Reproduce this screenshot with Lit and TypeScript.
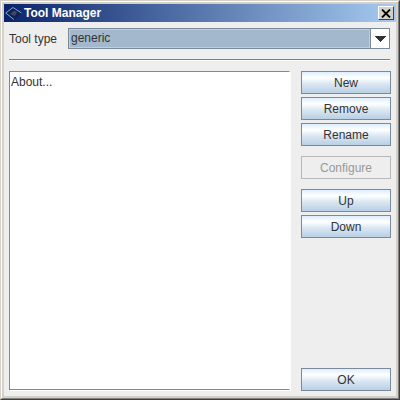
import { LitElement, html, css } from "lit";
import { customElement } from "lit/decorators.js";

@customElement("app-root")
export class AppRoot extends LitElement {
  static styles = css`
    :host { display: block; width: 400px; height: 400px; font-family: "Liberation Sans", Arial, sans-serif; font-size: 12px; color: #333; }
    * { box-sizing: border-box; }
    .frame { width: 400px; height: 400px; background: #d4d0c8; border-style: solid; border-width: 1px; border-color: #d4d0c8 #404040 #404040 #d4d0c8; }
    .frame2 { height: 100%; border-style: solid; border-width: 1px; border-color: #fff #808080 #808080 #fff; padding: 2px; display: flex; flex-direction: column; }
    .title { height: 18px; flex: none; display: flex; align-items: center; padding: 0 2px 0 1px; gap: 2px; background: linear-gradient(90deg, #0a246a, #a6caf0); color: #fff; font: bold 12px "Liberation Sans", Arial, sans-serif; }
    .title span { flex: 1; }
    .close { width: 16px; height: 14px; flex: none; background: #d4d0c8; border-style: solid; border-width: 1px; border-color: #fff #404040 #404040 #fff; display: flex; align-items: center; justify-content: center; }
    .body { flex: 1; background: #eee; padding: 6px 5px 5px 5px; display: flex; flex-direction: column; }
    .top { display: flex; align-items: center; height: 21px; flex: none; }
    .lbl { width: 59px; flex: none; }
    .combo { flex: 1; height: 21px; margin-right: 1px; border: 1px solid #7a8a99; background: #fff; display: flex; }
    .val { flex: 1; background: #a3b8cc; border: 1px solid #b8cfe5; padding-left: 1px; line-height: 17px; }
    .arrow { width: 19px; flex: none; border-left: 1px solid #7a8a99; background: #fff; display: flex; align-items: center; justify-content: center; }
    .sep { height: 2px; background: linear-gradient(#6382bf 50%, #fff 50%); margin: 10px 1px 10px 0; flex: none; }
    .main { flex: 1; display: flex; gap: 11px; min-height: 0; }
    .list { flex: none; width: 281px; height: 319px; border: 1px solid #7a8a99; border-right-color: #fff; background: #fff; padding: 3px 1px; box-shadow: 1px 1px 0 #fff; }
    .side { display: flex; flex-direction: column; width: 90px; }
    button { font: inherit; width: 90px; height: 23px; flex: none; margin: 0; padding: 1px 0 0; color: #333; border: 1px solid #7a8a99; background: linear-gradient(#ddeeff, #fff 28%, #dce8f3 55%, #b8cfe5); }
    button + button { margin-top: 3px; }
    button[disabled] { background: #eee; border-color: #b8b8b8; color: #999; }
    .g1 { margin-top: 10px !important; }
    .push { margin-top: auto !important; }
  `;
  render() {
    return html`<div class="frame"><div class="frame2">
      <div class="title">
        <svg width="17" height="13" viewBox="0 0 17 13"><path d="M8 0 17 6 9 13 0 6Z" fill="#0f1f50"/><path d="M8 .5 16.5 6 M8 .5 .7 6 9 12.5" stroke="#7fa8d8" fill="none"/><path d="M5 7 9 3.5 12 5 10 9Z" fill="#3a4a66"/></svg>
        <span>Tool Manager</span>
        <div class="close"><svg width="10" height="9" viewBox="0 0 10 9"><path d="M1 .5 9 8.5M9 .5 1 8.5" stroke="#000" stroke-width="1.8" fill="none"/></svg></div>
      </div>
      <div class="body">
        <div class="top">
          <div class="lbl">Tool type</div>
          <div class="combo"><div class="val">generic</div>
            <div class="arrow"><svg width="11" height="6" viewBox="0 0 11 6"><path d="M0 0H11V1H10V2H9V3H8V4H7V5H6V6H5V5H4V4H3V3H2V2H1V1H0Z" fill="#333"/></svg></div></div>
        </div>
        <div class="sep"></div>
        <div class="main">
          <div class="list">About...</div>
          <div class="side">
            <button>New</button><button>Remove</button><button>Rename</button>
            <button class="g1" disabled>Configure</button>
            <button class="g1">Up</button><button>Down</button>
            <button class="push">OK</button>
          </div>
        </div>
      </div>
    </div></div>`;
  }
}
